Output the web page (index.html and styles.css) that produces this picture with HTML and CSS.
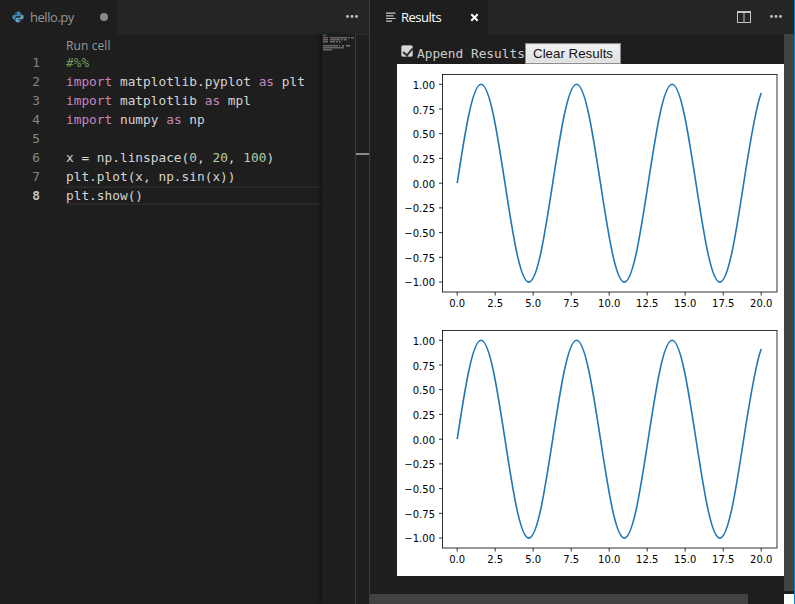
FILE: index.html
```html
<!DOCTYPE html>
<html lang="en">
<head>
<meta charset="utf-8">
<title>hello.py - Results</title>
<link rel="stylesheet" href="styles.css">
</head>
<body>
<div class="workbench">
  <section class="pane pane-left">
    <header class="tabbar">
      <div class="tab tab-file">
        <svg class="py-icon" viewBox="0 0 16 16" aria-hidden="true">
          <path class="py-a" d="M7.8.6C5.2.6 4.6 1.7 4.6 2.9v1.5h3.5v.6H3C1.500 5 .5 6.200.5 8.100S1.500 11.200 3 11.200h1.300V9.500C4.300 8 5.500 7.100 6.800 7.100h2.800c1 0 1.800-.8 1.800-1.800V2.900C11.400 1.500 10.200.6 7.800.6zM6 1.800a.75.75 0 1 1 0 1.500.75.75 0 0 1 0-1.500z"/>
          <path class="py-b" d="M8.200 15.400c2.600 0 3.200-1.100 3.200-2.300v-1.500H7.900V11H13c1.500 0 2.500-1.200 2.500-3.100S14.500 4.800 13 4.800h-1.300v1.700c0 1.500-1.200 2.400-2.500 2.400H6.400c-1 0-1.800.8-1.800 1.800v2.400c0 1.400 1.200 2.300 3.600 2.300zM10 14.200a.75.75 0 1 1 0-1.500.75.75 0 0 1 0 1.500z"/>
        </svg>
        <span class="tab-name">hello.py</span>
        <span class="dirty"></span>
      </div>
      <div class="tab-actions">
        <svg class="dots" viewBox="0 0 12 3" aria-hidden="true"><circle cx="1.500" cy="1.500" r="1.400"/><circle cx="6" cy="1.500" r="1.400"/><circle cx="10.500" cy="1.500" r="1.400"/></svg>
      </div>
    </header>
    <div class="editor">
      <div class="code">
        <div class="lens">Run cell</div>
        <div class="line"><span class="ln">1</span><span class="src cm">#%%</span></div>
        <div class="line"><span class="ln">2</span><span class="src"><span class="kw">import</span> matplotlib.pyplot <span class="kw">as</span> plt</span></div>
        <div class="line"><span class="ln">3</span><span class="src"><span class="kw">import</span> matplotlib <span class="kw">as</span> mpl</span></div>
        <div class="line"><span class="ln">4</span><span class="src"><span class="kw">import</span> numpy <span class="kw">as</span> np</span></div>
        <div class="line"><span class="ln">5</span><span class="src"></span></div>
        <div class="line"><span class="ln">6</span><span class="src">x = np.linspace(<span class="num">0</span>, <span class="num">20</span>, <span class="num">100</span>)</span></div>
        <div class="line"><span class="ln">7</span><span class="src">plt.plot(x, np.sin(x))</span></div>
        <div class="line line-active"><span class="ln">8</span><span class="src">plt.show()</span></div>
      </div>
      <div class="minimap">
        <svg class="mini-svg" viewBox="0 0 33 20" aria-hidden="true">
          <rect class="m-c" x="1" y="0.500" width="3" height="1.500"/>
          <rect class="m-k" x="1" y="3" width="5" height="1.500"/><rect class="m-t" x="8" y="3" width="17" height="1.500"/><rect class="m-k" x="26" y="3" width="2" height="1.500"/><rect class="m-t" x="29" y="3" width="3" height="1.500"/>
          <rect class="m-k" x="1" y="5" width="5" height="1.500"/><rect class="m-t" x="8" y="5" width="10" height="1.500"/><rect class="m-k" x="19" y="5" width="2" height="1.500"/><rect class="m-t" x="22" y="5" width="3" height="1.500"/>
          <rect class="m-k" x="1" y="7" width="5" height="1.500"/><rect class="m-t" x="8" y="7" width="5" height="1.500"/><rect class="m-k" x="14" y="7" width="2" height="1.500"/><rect class="m-t" x="17" y="7" width="2" height="1.500"/>
          <rect class="m-t" x="1" y="11" width="15" height="1.500"/><rect class="m-n" x="17" y="11" width="1" height="1.500"/><rect class="m-n" x="20" y="11" width="2" height="1.500"/><rect class="m-n" x="24" y="11" width="4" height="1.500"/>
          <rect class="m-t" x="1" y="13" width="21" height="1.500"/>
          <rect class="m-t" x="1" y="15" width="9" height="1.500"/>
        </svg>
      </div>
      <div class="ruler"><div class="ruler-mark"></div></div>
    </div>
  </section>

  <section class="pane pane-right">
    <header class="tabbar">
      <div class="tab tab-results">
        <svg class="list-icon" viewBox="0 0 10 10" aria-hidden="true"><path d="M0 .5h9.500v1.200H0zM0 3.200h7.500v1.200H0zM0 5.900h9.500v1.200H0zM0 8.500h6v1.200H0z"/></svg>
        <span class="tab-name tab-name-active">Results</span>
        <svg class="close" viewBox="0 0 9 9" aria-hidden="true"><path d="M1.300 1.300l6.400 6.400M7.700 1.300L1.300 7.700"/></svg>
      </div>
      <div class="tab-actions tab-actions-right">
        <svg class="split" viewBox="0 0 14 12" aria-hidden="true"><path d="M0 0h14v12H0zM1 2v9h5.500V2zM7.500 2v9H13V2z" fill-rule="evenodd"/></svg>
        <svg class="dots" viewBox="0 0 12 3" aria-hidden="true"><circle cx="1.500" cy="1.500" r="1.400"/><circle cx="6" cy="1.500" r="1.400"/><circle cx="10.500" cy="1.500" r="1.400"/></svg>
      </div>
    </header>
    <div class="results-wrap">
      <div class="results-main">
        <div class="results-body">
          <div class="controls">
            <input class="check" type="checkbox" checked aria-label="Append Results">
            <span class="append">Append Results</span>
            <button class="clear" type="button">Clear Results</button>
          </div>
          <div class="figures">
            <svg class="fig" viewBox="0 0 387 256" role="img" aria-label="sine plot">
              <path class="curve" transform="translate(60.2 119.2) scale(15.2 -98.9)" d="M0 0C.5123 .5123 1.0023 1 1.5708 1C2.1393 1 2.6293 .5123 3.1416 0C3.6539 -.5123 4.1439 -1 4.7124 -1C5.2809 -1 5.7709 -.5123 6.2832 0C6.7955 .5123 7.2855 1 7.854 1C8.4225 1 8.9125 .5123 9.4248 0C9.9371 -.5123 10.4271 -1 10.9956 -1C11.5641 -1 12.0541 -.5123 12.5664 0C13.0787 .5123 13.5687 1 14.1372 1C14.7057 1 15.1957 .5123 15.708 0C16.2203 -.5123 16.7103 -1 17.2788 -1C17.8473 -1 18.3373 -.5123 18.8496 0C19.2331 .3835 19.6165 .7564 20 .9129"/>
              <rect class="axes" x="45.500" y="10.500" width="334.500" height="217.500"/>
              <path class="ticks" d="M60.2 228v3.500M98.2 228v3.500M136.2 228v3.500M174.2 228v3.500M212.2 228v3.500M250.2 228v3.500M288.2 228v3.500M326.2 228v3.500M364.2 228v3.500M42 20.300h3.500M42 45h3.500M42 69.700h3.500M42 94.400h3.500M42 119.200h3.500M42 143.900h3.500M42 168.600h3.500M42 193.300h3.500M42 218h3.500"/>
              <g class="yl"><text x="38" y="25">1.00</text><text x="38" y="49.600">0.75</text><text x="38" y="74.300">0.50</text><text x="38" y="99">0.25</text><text x="38" y="123.700">0.00</text><text x="38" y="148.400">−0.25</text><text x="38" y="173">−0.50</text><text x="38" y="197.700">−0.75</text><text x="38" y="222">−1.00</text></g>
              <g class="xl"><text x="60.2" y="243">0.0</text><text x="98.2" y="243">2.5</text><text x="136.2" y="243">5.0</text><text x="174.2" y="243">7.5</text><text x="212.2" y="243">10.0</text><text x="250.2" y="243">12.5</text><text x="288.2" y="243">15.0</text><text x="326.2" y="243">17.5</text><text x="364.2" y="243">20.0</text></g>
            </svg>
            <svg class="fig" viewBox="0 0 387 256" role="img" aria-label="sine plot">
              <path class="curve" transform="translate(60.2 119.2) scale(15.2 -98.9)" d="M0 0C.5123 .5123 1.0023 1 1.5708 1C2.1393 1 2.6293 .5123 3.1416 0C3.6539 -.5123 4.1439 -1 4.7124 -1C5.2809 -1 5.7709 -.5123 6.2832 0C6.7955 .5123 7.2855 1 7.854 1C8.4225 1 8.9125 .5123 9.4248 0C9.9371 -.5123 10.4271 -1 10.9956 -1C11.5641 -1 12.0541 -.5123 12.5664 0C13.0787 .5123 13.5687 1 14.1372 1C14.7057 1 15.1957 .5123 15.708 0C16.2203 -.5123 16.7103 -1 17.2788 -1C17.8473 -1 18.3373 -.5123 18.8496 0C19.2331 .3835 19.6165 .7564 20 .9129"/>
              <rect class="axes" x="45.500" y="10.500" width="334.500" height="217.500"/>
              <path class="ticks" d="M60.2 228v3.500M98.2 228v3.500M136.2 228v3.500M174.2 228v3.500M212.2 228v3.500M250.2 228v3.500M288.2 228v3.500M326.2 228v3.500M364.2 228v3.500M42 20.300h3.500M42 45h3.500M42 69.700h3.500M42 94.400h3.500M42 119.200h3.500M42 143.900h3.500M42 168.600h3.500M42 193.300h3.500M42 218h3.500"/>
              <g class="yl"><text x="38" y="25">1.00</text><text x="38" y="49.600">0.75</text><text x="38" y="74.300">0.50</text><text x="38" y="99">0.25</text><text x="38" y="123.700">0.00</text><text x="38" y="148.400">−0.25</text><text x="38" y="173">−0.50</text><text x="38" y="197.700">−0.75</text><text x="38" y="222">−1.00</text></g>
              <g class="xl"><text x="60.2" y="243">0.0</text><text x="98.2" y="243">2.5</text><text x="136.2" y="243">5.0</text><text x="174.2" y="243">7.5</text><text x="212.2" y="243">10.0</text><text x="250.2" y="243">12.5</text><text x="288.2" y="243">15.0</text><text x="326.2" y="243">17.5</text><text x="364.2" y="243">20.0</text></g>
            </svg>
          </div>
        </div>
        <div class="hscroll"><div class="hthumb"></div></div>
      </div>
      <div class="vscroll">
        <div class="vthumb"></div>
        <div class="corner"></div>
      </div>
    </div>
  </section>
</div>
</body>
</html>
```
FILE: styles.css
```css
* { box-sizing: border-box; }
html, body { margin: 0; height: 100%; background: #1e1e1e; overflow: hidden; }

.workbench { display: flex; width: 795px; height: 604px; background: #1e1e1e; border-right: 1px solid #0e7fc9; }

.pane { display: flex; flex-direction: column; height: 604px; }
.pane-left { width: 370px; border-right: 1px solid #3d3d3d; }
.pane-right { width: 424px; }

.tabbar { display: flex; height: 34px; flex: none; background: #252526; }
.tab { display: flex; align-items: center; height: 34px; background: #1e1e1e; position: relative; }
.tab-file { width: 117px; padding-left: 12px; }
.tab-results { width: 118px; padding-left: 16px; }
.tab-name { font: 13px/34px "Open Sans", sans-serif; color: #969696; }
.tab-file .tab-name { margin-left: 6px; letter-spacing: -0.45px; width: 44px; }
.tab-name-active { color: #ffffff; margin-left: 5px; letter-spacing: -0.5px; width: 40px; }

.py-icon { width: 12px; height: 12px; display: block; }
.py-a { fill: #3f8dbd; fill-rule: evenodd; }
.py-b { fill: #5fa3c4; fill-rule: evenodd; }
.dirty { width: 8px; height: 8px; border-radius: 50%; background: #8a8a8a; margin-left: 26px; }
.list-icon { width: 10px; height: 10px; fill: #c8c8c8; display: block; }
.close { width: 9px; height: 9px; margin-left: 29px; stroke: #ffffff; stroke-width: 2; fill: none; display: block; }

.tab-actions { margin-left: auto; display: flex; align-items: center; padding-right: 11px; height: 34px; }
.tab-actions-right { padding-right: 12px; }
.dots { width: 12px; height: 3px; fill: #c0c0c0; display: block; margin-top: -1px; }
.split { width: 14px; height: 12px; fill: #c5c5c5; display: block; margin-right: 19px; }

.editor { display: flex; flex: 1; min-height: 0; }
.code { width: 322px; flex: none; font: 12.8px/19px "DejaVu Sans Mono", monospace; color: #d4d4d4; }
.lens { height: 19px; padding-left: 66px; font: 12px/23px "Open Sans", sans-serif; color: #999999; letter-spacing: 0.1px; }
.line { display: flex; height: 19px; white-space: pre; }
.ln { width: 40px; text-align: right; color: #858585; margin-right: 26px; flex: none; }
.src { flex: 1; min-width: 0; }
.line-active .ln { color: #c6c6c6; font-weight: 700; }
.line-active .src { border-top: 2px solid #282828; border-bottom: 2px solid #282828; line-height: 15px; }
.kw { color: #c586c0; }
.num { color: #b5cea8; }
.cm { color: #6a9955; }

.minimap { width: 33px; flex: none; box-shadow: -3px 0 4px -1px rgba(0, 0, 0, 0.45); }
.mini-svg { display: block; width: 33px; height: 20px; }
.m-c { fill: #6a9955; opacity: 0.6; }
.m-k { fill: #c586c0; opacity: 0.55; }
.m-t { fill: #d4d4d4; opacity: 0.4; }
.m-n { fill: #b5cea8; opacity: 0.55; }

.ruler { flex: 1; border-left: 1px solid #3d3d3d; border-top: 1px solid #2c2c2c; padding-top: 118px; }
.ruler-mark { height: 2px; background: #8a8a8a; }

.results-wrap { display: flex; flex: 1; min-height: 0; }
.results-main { width: 414px; flex: none; display: flex; flex-direction: column; }
.results-body { flex: 1; min-height: 0; padding: 9px 0 0 27px; }
.controls { display: flex; align-items: flex-start; height: 21px; }
.check { appearance: none; -webkit-appearance: none; position: relative; width: 12px; height: 12px; margin: 2px 4px 0; background: #d8d8d8; border: 1px solid #9a9a9a; border-radius: 2px; flex: none; }
.check::after { content: ""; position: absolute; left: 3px; top: 0; width: 4px; height: 8px; border: solid #333333; border-width: 0 2px 2px 0; transform: rotate(40deg); }
.append { font: 12.8px/21px "DejaVu Sans Mono", monospace; color: #cccccc; width: 108px; flex: none; white-space: pre; }
.clear { width: 96px; height: 21px; padding: 0; background: linear-gradient(#f4f4f4, #dedede); border: 1px solid #8c8c8c; box-shadow: inset 0 0 0 1px #e6e6e6; border-radius: 0; color: #111111; font: 13.33px/17px "Liberation Sans", Arial, sans-serif; }
.figures { width: 387px; }
.fig { display: block; width: 387px; height: 256px; background: #ffffff; }
.curve { fill: none; stroke: #1f77b4; stroke-width: 1.6; vector-effect: non-scaling-stroke; }
.axes { fill: none; stroke: #000000; stroke-width: 0.8; }
.ticks { fill: none; stroke: #000000; stroke-width: 0.8; }
.yl text, .xl text { font: 10px "DejaVu Sans", sans-serif; fill: #000000; }
.yl text { text-anchor: end; }
.xl text { text-anchor: middle; }

.hscroll { height: 10px; flex: none; }
.hthumb { width: 378px; height: 10px; background: #424242; }

.vscroll { width: 10px; flex: none; display: flex; flex-direction: column; }
.vthumb { height: 557px; background: #424242; margin-bottom: 3px; flex: none; }
.corner { flex: 1; background: #ffffff; }
```
